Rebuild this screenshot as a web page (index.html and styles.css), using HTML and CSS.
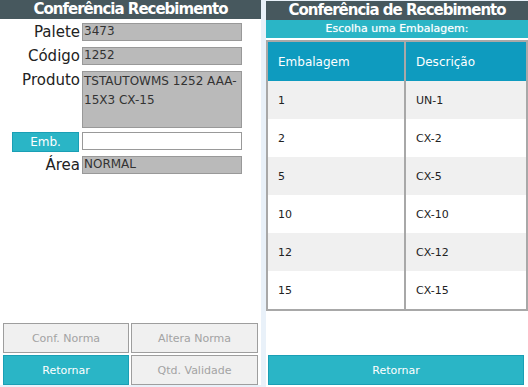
FILE: index.html
```html
<!DOCTYPE html>
<html lang="pt-BR">

<head>
    <meta charset="UTF-8">
    <meta name="viewport" content="width=device-width, initial-scale=1.0">
    <title>Conferência Recebimento</title>
    <link rel="stylesheet" href="styles.css">
</head>

<body>
    <div class="screen">
        <!-- painel da conferencia -->
        <div class="panel panel-left">
            <div class="title">Conferência Recebimento</div>
            <div class="form">
                <div class="row">
                    <label class="label">Palete</label>
                    <div class="field">3473</div>
                </div>
                <div class="row">
                    <label class="label">Código</label>
                    <div class="field">1252</div>
                </div>
                <div class="row row-tight">
                    <label class="label">Produto</label>
                    <div class="field field-big">TSTAUTOWMS 1252 AAA-15X3 CX-15</div>
                </div>
                <div class="row row-tight">
                    <button class="btn btn-teal btn-emb">Emb.</button>
                    <input type="text" class="field field-input">
                </div>
                <div class="row row-tight">
                    <label class="label">Área</label>
                    <div class="field">NORMAL</div>
                </div>
            </div>
            <div class="actions">
                <button class="btn btn-off">Conf. Norma</button>
                <button class="btn btn-off">Altera Norma</button>
                <button class="btn btn-teal">Retornar</button>
                <button class="btn btn-off">Qtd. Validade</button>
            </div>
        </div>

        <!-- escolha de embalagem -->
        <div class="panel panel-right">
            <div class="title">Conferência de Recebimento</div>
            <div class="subtitle">Escolha uma Embalagem:</div>
            <table class="grid">
                <thead>
                    <tr>
                        <th class="col-emb">Embalagem</th>
                        <th>Descrição</th>
                    </tr>
                </thead>
                <tbody>
                    <tr><td>1</td><td>UN-1</td></tr>
                    <tr><td>2</td><td>CX-2</td></tr>
                    <tr><td>5</td><td>CX-5</td></tr>
                    <tr><td>10</td><td>CX-10</td></tr>
                    <tr><td>12</td><td>CX-12</td></tr>
                    <tr><td>15</td><td>CX-15</td></tr>
                </tbody>
            </table>
            <button class="btn btn-teal btn-back">Retornar</button>
        </div>
    </div>
</body>

</html>
```

FILE: styles.css
```css
body {
    margin: 0;
    padding: 0;
    background: #e9f1f9;
    font-family: "DejaVu Sans", Verdana, sans-serif;
    color: #222;
}

.screen {
    display: flex;
    width: 528px;
    height: 387px;
    gap: 5px;
}

.panel {
    background: #fff;
    display: flex;
    flex-direction: column;
}

.panel-left {
    width: 261px;
    height: 385px;
}

.panel-right {
    width: 262px;
    height: 386px;
    margin-top: 1px;
}

.title {
    height: 19px;
    line-height: 19px;
    background: #47585e;
    color: #fff;
    font-weight: bold;
    font-size: 15px;
    letter-spacing: -1px;
    text-align: center;
}

.subtitle {
    height: 18px;
    line-height: 18px;
    background: #2ab5c6;
    color: #fff;
    font-size: 11px;
    text-align: center;
    text-shadow: 0 0 1px rgba(255, 255, 255, 0.6);
}

/* formulario */
.form {
    padding-top: 4px;
}

.row {
    display: flex;
    align-items: flex-start;
    margin-bottom: 6px;
}

.row-tight {
    margin-bottom: 4px;
}

.row-tight:first-child {
    margin-bottom: 4px;
}

.label {
    width: 80px;
    text-align: right;
    font-size: 15px;
    line-height: 18px;
    color: #222;
    margin-right: 2px;
}

.field {
    box-sizing: border-box;
    width: 160px;
    height: 18px;
    background: #bababa;
    border: 1px solid #999;
    font-family: "DejaVu Sans", Verdana, sans-serif;
    font-size: 12px;
    line-height: 15px;
    padding: 0 1px;
    color: #333;
    margin: 0;
}

.field-big {
    height: 57px;
    line-height: 19px;
}

.field-input {
    background: #fff;
    outline: none;
}

.btn {
    box-sizing: border-box;
    font-family: "DejaVu Sans", Verdana, sans-serif;
    font-size: 11px;
    margin: 0;
    padding: 0;
    cursor: pointer;
}

.btn-teal {
    background: #2ab5c6;
    border: 1px solid #1a9fb5;
    color: #fff;
}

.btn-off {
    background: #f0f0f0;
    border: 1px solid #9e9e9e;
    color: #a3a3a3;
}

.btn-emb {
    width: 67px;
    height: 20px;
    margin-left: 12px;
    margin-right: 3px;
    font-size: 12px;
}

.actions {
    margin-top: auto;
    padding: 0 3px 0 3px;
    display: grid;
    grid-template-columns: 126px 127px;
    grid-auto-rows: 30px;
    column-gap: 2px;
    row-gap: 2px;
}

/* tabela de embalagens */
.grid {
    margin-top: 2px;
    border-collapse: collapse;
    border: 2px solid #a8a8a8;
    width: 262px;
    font-size: 11px;
}

.grid th {
    background: #0e9bbf;
    color: #fff;
    font-weight: normal;
    font-size: 12px;
    text-align: left;
    height: 39px;
    padding: 0 0 0 10px;
}

.grid td {
    height: 38px;
    padding: 0 0 0 10px;
    color: #222;
}

.grid .col-emb,
.grid td:first-child {
    width: 126px;
    border-right: 2px solid #a8a8a8;
}

.grid tbody tr:nth-child(odd) td {
    background: #f0f0f0;
}

.btn-back {
    margin-top: auto;
    margin-left: 2px;
    margin-bottom: 2px;
    width: 256px;
    height: 30px;
}
```
